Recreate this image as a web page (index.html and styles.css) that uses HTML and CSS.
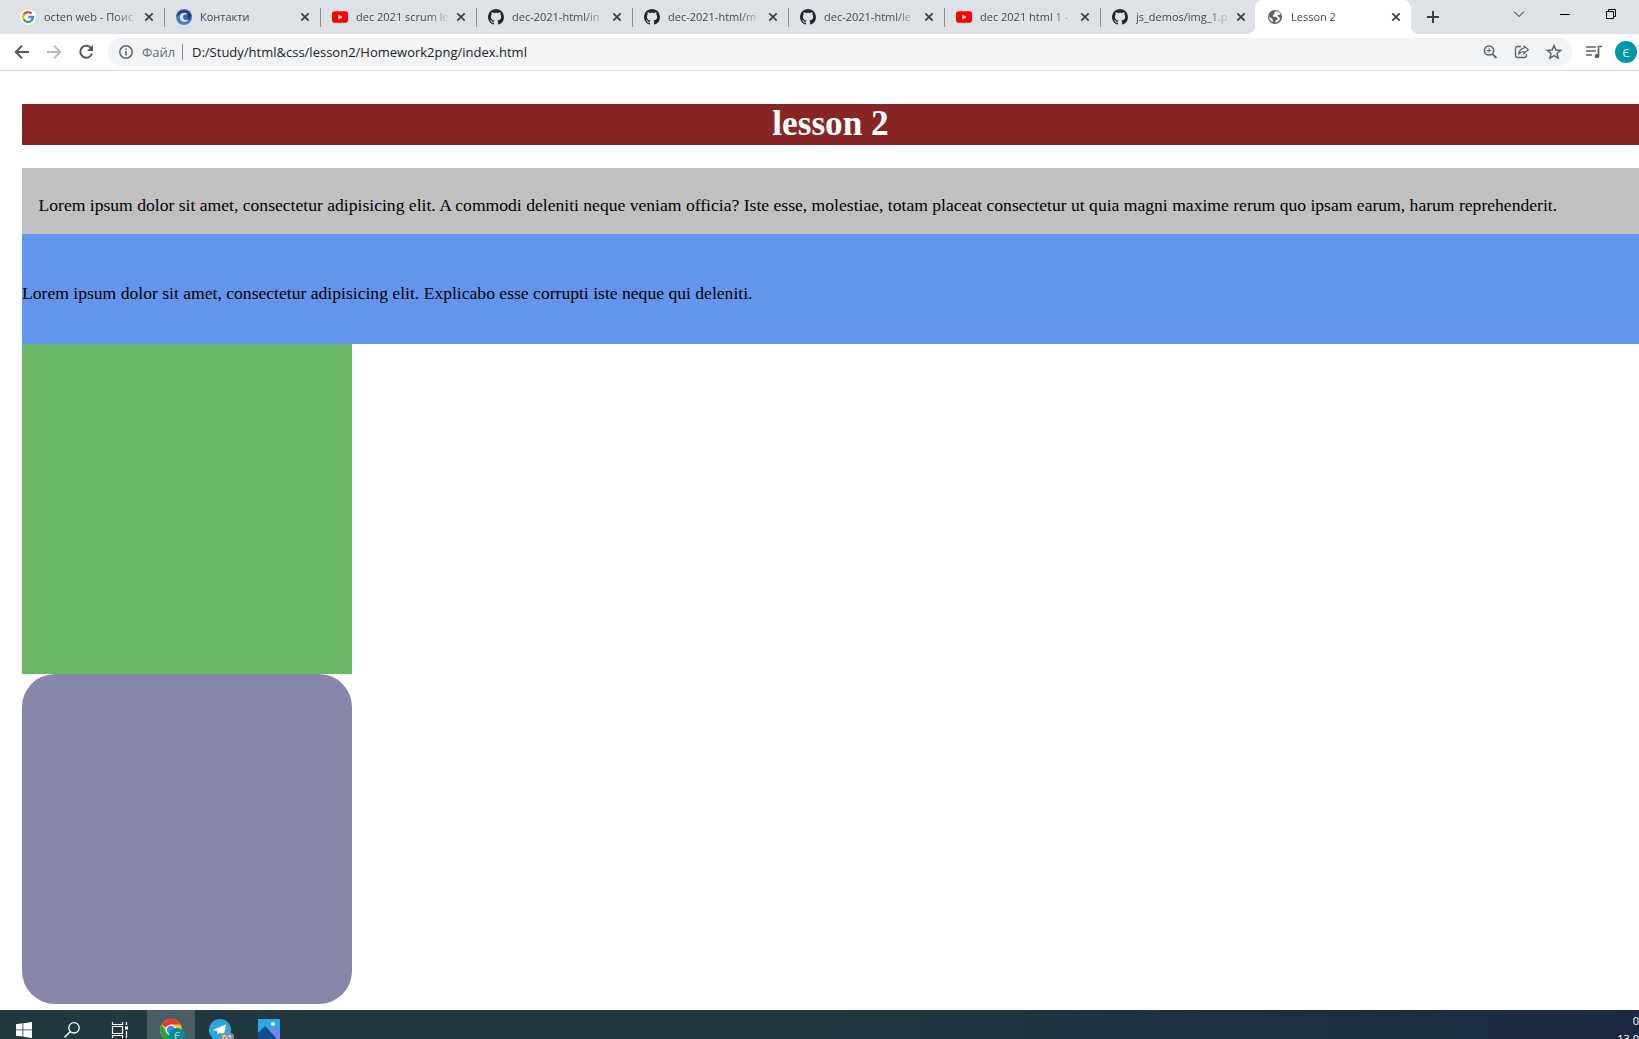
FILE: index.html
```html
<!DOCTYPE html>
<html lang="uk">
<head>
<meta charset="utf-8">
<title>Lesson 2</title>
<link rel="stylesheet" href="styles.css">
</head>
<body>
<svg class="sprite" aria-hidden="true">
  <symbol id="close" viewBox="0 0 10 10"><path d="M1.3 1.3l7.4 7.4M8.7 1.3L1.3 8.7" stroke="#3c4043" stroke-width="1.7"/></symbol>
  <symbol id="youtube" viewBox="0 0 16 16"><rect y="2.3" width="16" height="11.4" rx="2.6" fill="#f00"/><path d="M6.4 5.5v5L10.6 8z" fill="#fff"/></symbol>
  <symbol id="github" viewBox="0 0 16 16"><path fill="#24292f" d="M8 0C3.58 0 0 3.58 0 8c0 3.54 2.29 6.53 5.47 7.59.4.07.55-.17.55-.38 0-.19-.01-.82-.01-1.49-2.01.37-2.53-.49-2.69-.94-.09-.23-.48-.94-.82-1.13-.28-.15-.68-.52-.01-.53.63-.01 1.08.58 1.23.82.72 1.21 1.87.87 2.33.66.07-.52.28-.87.51-1.07-1.78-.2-3.64-.89-3.64-3.95 0-.87.31-1.59.82-2.15-.08-.2-.36-1.02.08-2.12 0 0 .67-.21 2.2.82.64-.18 1.32-.27 2-.27s1.36.09 2 .27c1.53-1.04 2.2-.82 2.2-.82.44 1.1.16 1.92.08 2.12.51.56.82 1.27.82 2.15 0 3.07-1.87 3.75-3.65 3.95.29.25.54.73.54 1.48 0 1.07-.01 1.93-.01 2.2 0 .21.15.46.55.38A8.01 8.01 0 0 0 16 8c0-4.42-3.58-8-8-8z"/></symbol>
</svg>

<header class="browser">
  <div class="tabstrip">
    <div class="tab">
      <svg class="favicon" viewBox="0 0 16 16"><circle cx="8" cy="8" r="8" fill="#fff"/><g fill="none" stroke-width="2.3"><path d="M11.6 4.6A5 5 0 0 0 3.6 5.7" stroke="#ea4335"/><path d="M3.6 5.7a5 5 0 0 0 0 4.6" stroke="#fbbc05"/><path d="M3.6 10.3a5 5 0 0 0 7.6 1.5" stroke="#34a853"/><path d="M11.2 11.8A5 5 0 0 0 13 8H8.2" stroke="#4285f4"/></g></svg>
      <a class="tab-title" href="#">octen web - Поис</a>
      <button class="tab-close" aria-label="Закрити"><svg><use href="#close"/></svg></button>
    </div>
    <div class="tab">
      <svg class="favicon" viewBox="0 0 16 16"><circle cx="8" cy="8" r="8" fill="#4a78c4"/><path d="M.5 7A8 8 0 0 1 15.500 6C15 10 13 12 11 12.500 13 9 12 4.500 8 4 4 3.700 3 6 .5 7z" fill="#233f7a"/><path d="M11.500 5A4.600 4.600 0 1 0 12.500 10.500C10 12 6.500 11 6.800 8 7 6 9 4.800 11.500 5z" fill="#dce7f7"/><circle cx="9.800" cy="8.300" r="2" fill="#3560ab"/></svg>
      <a class="tab-title" href="#">Контакти</a>
      <button class="tab-close" aria-label="Закрити"><svg><use href="#close"/></svg></button>
    </div>
    <div class="tab">
      <svg class="favicon"><use href="#youtube"/></svg>
      <a class="tab-title" href="#">dec 2021 scrum le</a>
      <button class="tab-close" aria-label="Закрити"><svg><use href="#close"/></svg></button>
    </div>
    <div class="tab">
      <svg class="favicon"><use href="#github"/></svg>
      <a class="tab-title" href="#">dec-2021-html/in</a>
      <button class="tab-close" aria-label="Закрити"><svg><use href="#close"/></svg></button>
    </div>
    <div class="tab">
      <svg class="favicon"><use href="#github"/></svg>
      <a class="tab-title" href="#">dec-2021-html/m</a>
      <button class="tab-close" aria-label="Закрити"><svg><use href="#close"/></svg></button>
    </div>
    <div class="tab">
      <svg class="favicon"><use href="#github"/></svg>
      <a class="tab-title" href="#">dec-2021-html/le</a>
      <button class="tab-close" aria-label="Закрити"><svg><use href="#close"/></svg></button>
    </div>
    <div class="tab">
      <svg class="favicon"><use href="#youtube"/></svg>
      <a class="tab-title" href="#">dec 2021 html 1 -</a>
      <button class="tab-close" aria-label="Закрити"><svg><use href="#close"/></svg></button>
    </div>
    <div class="tab tab-last">
      <svg class="favicon"><use href="#github"/></svg>
      <a class="tab-title" href="#">js_demos/img_1.p</a>
      <button class="tab-close" aria-label="Закрити"><svg><use href="#close"/></svg></button>
    </div>
    <div class="tab tab-active">
      <svg class="favicon" viewBox="0 0 16 16"><circle cx="8" cy="8" r="7" fill="#5f6368"/><path d="M8.5 2.3L7 4.2v1.6L5.6 6.6l.6 1.2h3l1.2 1.4v1.2L8.6 11.6l-.5 2.1 2.6-.6 2.6-3-.6-1.5-1.6-.8-.8-1.8h1.8l1.5-.9-1-1.6-1.8-1.1zM2.2 7.6l3.6 3v2.6L4 12.1 2.6 10z" fill="#fff"/></svg>
      <a class="tab-title" href="#">Lesson 2</a>
      <button class="tab-close" aria-label="Закрити"><svg><use href="#close"/></svg></button>
    </div>
    <button class="new-tab" aria-label="Нова вкладка"><svg width="12" height="12" viewBox="0 0 12 12"><path d="M6 0v12M0 6h12" stroke="#3c4043" stroke-width="2"/></svg></button>
    <div class="window-controls">
      <button aria-label="Пошук вкладок"><svg width="10" height="10" viewBox="0 0 10 10"><path d="M0 2.5l5 5 5-5" fill="none" stroke="#222"/></svg></button>
      <button aria-label="Згорнути"><svg width="10" height="10" viewBox="0 0 10 10"><path d="M0 5.5h10" stroke="#000"/></svg></button>
      <button aria-label="Відновити"><svg width="10" height="10" viewBox="0 0 10 10"><path d="M.5 2.5h7v7h-7zM2.5 2.5v-2h7v7h-2" fill="none" stroke="#000"/></svg></button>
    </div>
  </div>

  <div class="toolbar">
    <button class="tool" aria-label="Назад"><svg width="16" height="16" viewBox="0 0 16 16"><path d="M15 8H2.2M8 1.8L1.8 8 8 14.2" fill="none" stroke="#55595d" stroke-width="2"/></svg></button>
    <button class="tool" aria-label="Вперед"><svg width="16" height="16" viewBox="0 0 16 16"><path d="M1 8h12.8M8 1.8L14.2 8 8 14.2" fill="none" stroke="#b9bbbd" stroke-width="2"/></svg></button>
    <button class="tool" aria-label="Оновити"><svg width="16" height="16" viewBox="0 0 16 16"><path d="M13.4 4.6A6 6 0 1 0 14 9.5" fill="none" stroke="#55595d" stroke-width="2"/><path d="M15 1v6H9z" fill="#55595d"/></svg></button>
    <div class="omnibox">
      <svg width="16" height="16" viewBox="0 0 16 16"><circle cx="8" cy="8" r="6.2" fill="none" stroke="#5f6368" stroke-width="1.5"/><path d="M8 7v4.4M8 4.4V6" stroke="#5f6368" stroke-width="1.6"/></svg>
      <label class="scheme" for="url">Файл</label>
      <input class="url" id="url" type="text" value="D:/Study/html&amp;css/lesson2/Homework2png/index.html">
      <button class="tool" aria-label="Масштаб"><svg width="16" height="16" viewBox="0 0 16 16"><circle cx="7" cy="6.5" r="4.6" fill="none" stroke="#5f6368" stroke-width="1.5"/><path d="M10.3 9.8l4.2 4.2" stroke="#5f6368" stroke-width="1.8"/><path d="M7 4.3v4.4M4.8 6.5h4.4" stroke="#5f6368"/></svg></button>
      <button class="tool" aria-label="Поділитися"><svg width="16" height="16" viewBox="0 0 16 16"><path d="M7 2.5H3.5a2 2 0 0 0-2 2v7a2 2 0 0 0 2 2h7a2 2 0 0 0 2-2V10" fill="none" stroke="#5f6368" stroke-width="1.3"/><path d="M10 2l4.3 3.8L10 9.6V7.5c-2.6 0-4.2.8-5.4 2.6C5 7 6.8 4.5 10 4.1z" fill="none" stroke="#5f6368" stroke-width="1.2" stroke-linejoin="round"/></svg></button>
      <button class="tool" aria-label="Закладка"><svg width="16" height="16" viewBox="0 0 16 16"><path d="M8 1.600l1.900 4.400 4.800.4-3.700 3.100 1.200 4.700L8 11.700l-4.200 2.500 1.200-4.700L1.300 6.400l4.800-.4z" fill="none" stroke="#5f6368" stroke-width="1.5"/></svg></button>
    </div>
    <button class="tool media" aria-label="Медіа"><svg width="16" height="16" viewBox="0 0 16 16"><path d="M0 3h10M0 7h10M0 11h6" stroke="#5f6368" stroke-width="1.6"/><path d="M12.5 12.5V2.5H16" fill="none" stroke="#5f6368" stroke-width="1.7"/><circle cx="11" cy="12" r="2.3" fill="#5f6368"/></svg></button>
    <button class="avatar">Є</button>
  </div>
</header>

<main class="viewport">
  <h1 class="heading">lesson 2</h1>
  <p class="silver">Lorem ipsum dolor sit amet, consectetur adipisicing elit. A commodi deleniti neque veniam officia? Iste esse, molestiae, totam placeat consectetur ut quia magni maxime rerum quo ipsam earum, harum reprehenderit.</p>
  <p class="blue">Lorem ipsum dolor sit amet, consectetur adipisicing elit. Explicabo esse corrupti iste neque qui deleniti.</p>
  <div class="square green"></div>
  <div class="square purple"></div>
</main>

<footer class="taskbar">
  <button aria-label="Пуск"><svg width="16" height="16" viewBox="0 0 16 16"><path d="M0 2.2L6.5 1.3v6.2H0zM7.3 1.2L16 0v7.5H7.3zM0 8.3h6.5v6.3L0 13.7zM7.3 8.3H16V16l-8.7-1.2z" fill="#fff"/></svg></button>
  <button aria-label="Пошук"><svg width="16" height="16" viewBox="0 0 16 16"><circle cx="10" cy="5.8" r="5.2" fill="none" stroke="#fff" stroke-width="1.3"/><path d="M6.3 9.5L.5 15.5" stroke="#fff" stroke-width="1.4"/></svg></button>
  <button aria-label="Перегляд завдань"><svg width="16" height="16" viewBox="0 0 16 16"><path d="M.5 0v2.5h10V0M.5 16v-2.5h10V16M.5 4.5h10v7H.5zM14.5 0v3M14.5 9v7" fill="none" stroke="#fff" stroke-width="1.2"/><path d="M13 4.5h3v3h-3z" fill="#fff"/></svg></button>
  <div class="apps">
    <button class="app-active" aria-label="Chrome"><svg width="24" height="24" viewBox="0 0 24 24"><circle cx="12" cy="12" r="11" fill="#fbc116"/><path d="M12 12L2.5 6.5A11 11 0 0 1 21.5 6.5H12z" fill="#e33b2e"/><path d="M2.5 6.5a11 11 0 0 0 8 16.4L15 15l-7.500-.5z" fill="#23a14b"/><circle cx="12" cy="12" r="5.400" fill="#fff"/><circle cx="12" cy="12" r="4.200" fill="#4285f4"/><circle cx="18" cy="18" r="8" fill="#0d8a92"/><text x="15" y="22" class="badge-letter">Є</text></svg></button>
    <button aria-label="Telegram"><svg width="24" height="24" viewBox="0 0 24 24"><circle cx="12" cy="12" r="11" fill="#2ca5e0"/><path d="M4.500 12L18 6.500l-2.200 11-4-3-2 2-.6-3.600z" fill="#fff"/><rect x="12" y="15" width="14" height="12" rx="4" fill="#8a8a8a"/><text x="14" y="24" class="badge-count">01</text></svg></button>
    <button aria-label="Фотографії"><svg width="22" height="22" viewBox="0 0 22 22"><rect width="22" height="22" rx="1" fill="#2ba7ec"/><path d="M9 13l6-6 7 8v7H9z" fill="#7b87dc"/><path d="M0 14l7-7 14 15H0z" fill="#0e4a8d"/><circle cx="15" cy="5" r="2" fill="#fff"/></svg></button>
  </div>
  <div class="clock"><span>0</span><span>13.0</span></div>
</footer>
</body>
</html>
```
FILE: styles.css
```css
* { box-sizing: border-box; }

body {
  display: flex;
  flex-direction: column;
  height: 100vh;
  margin: 0;
  overflow: hidden;
  background: #fff;
  font-family: "Open Sans", "Noto Sans", sans-serif;
  font-size: 11px;
}

button {
  display: flex;
  align-items: center;
  justify-content: center;
  flex: none;
  padding: 0;
  border: 0;
  background: none;
  font: inherit;
}

svg { flex: none; overflow: visible; }

.sprite { position: absolute; width: 0; height: 0; }

/* Tabs */
.tabstrip {
  display: flex;
  height: 34px;
  padding-left: 8px;
  background: #dee1e6;
}

.tab {
  position: relative;
  display: flex;
  align-items: center;
  flex: 0 1 156px;
  min-width: 0;
  padding: 0 9px 0 12px;
}

.tab::after {
  content: "";
  position: absolute;
  top: 8px;
  left: 100%;
  width: 1px;
  height: 19px;
  background: #8a8d91;
}

.tab-last::after { display: none; }

.favicon { width: 16px; height: 16px; margin-right: 8px; }

.tab-title {
  flex: 1;
  min-width: 0;
  overflow: hidden;
  color: #45494d;
  line-height: 18px;
  text-decoration: none;
  white-space: nowrap;
  -webkit-mask-image: linear-gradient(to left, transparent, #000 24px);
  mask-image: linear-gradient(to left, transparent, #000 24px);
}

.tab-close { width: 12px; height: 16px; margin-left: 4px; }
.tab-close svg { width: 10px; height: 10px; }

.tab-active {
  margin-left: -1px;
  border-radius: 8px 8px 0 0;
  background: #fff;
}

.tab-active::before,
.tab-active::after {
  content: "";
  position: absolute;
  top: auto;
  bottom: 0;
  width: 8px;
  height: 8px;
}

.tab-active::before {
  right: 100%;
  background: radial-gradient(circle at 0 0, transparent 8px, #fff 8px);
}

.tab-active::after {
  left: 100%;
  background: radial-gradient(circle at 100% 0, transparent 8px, #fff 8px);
}

.new-tab { width: 28px; margin-left: 8px; }

.window-controls { display: flex; margin-left: auto; padding-right: 5px; }
.window-controls button { width: 46px; height: 28px; }

/* Address bar */
.toolbar {
  display: flex;
  align-items: center;
  height: 37px;
  padding: 3px 2px 3px 6px;
  border-bottom: 1px solid #d8dadc;
}

.tool { width: 32px; height: 28px; }

.omnibox {
  display: flex;
  align-items: center;
  flex: 1;
  height: 28px;
  margin-left: 6px;
  padding: 0 2px 0 10px;
  border-radius: 14px;
  background: #f1f3f4;
}

.scheme {
  width: 41px;
  margin: 0 9px 0 8px;
  border-right: 1px solid #8a8d91;
  color: #6b6f73;
  font-size: 13px;
  line-height: 16px;
}

.url {
  flex: 1;
  min-width: 0;
  padding: 0;
  border: 0;
  background: none;
  color: #202124;
  font: 13px "Open Sans", "Noto Sans", sans-serif;
}

.media { width: 43px; }

.avatar {
  width: 22px;
  height: 22px;
  border-radius: 50%;
  background: #0097a7;
  color: #fff;
}

/* Page, shown at 110% browser zoom */
.viewport {
  flex: 1;
  min-height: 0;
  overflow: hidden;
  padding: 30px 0 0 20px;
  zoom: 1.1;
  font-family: "Liberation Serif", "Times New Roman", serif;
  font-size: 16px;
  line-height: 18px;
}

.heading {
  margin: 0 0 21px;
  background: #882626;
  color: #fff;
  font-size: 32px;
  line-height: 37px;
  text-align: center;
}

.silver {
  height: 60px;
  margin: 0;
  padding: 26px 15px 0;
  background: silver;
}

.blue {
  height: 100px;
  margin: 0;
  background: cornflowerblue;
  line-height: 108px;
}

.square { width: 300px; height: 300px; }
.green { background: #6bb966; }
.purple { border-radius: 30px; background: #8986ab; }

/* Taskbar */
.taskbar {
  display: flex;
  flex: none;
  height: 29px;
  overflow: hidden;
  background: linear-gradient(90deg, #22383f, #22383f 50%, #1a2842);
}

.taskbar button { width: 48px; height: 40px; }
.apps { display: flex; gap: 1px; margin-left: 3px; }
.taskbar .app-active { background: #4b5d64; }

.badge-letter { fill: #9fe3e4; font-size: 10px; }
.badge-count { fill: #fff; font-size: 9px; }

.clock {
  display: flex;
  flex-direction: column;
  align-items: flex-end;
  margin-left: auto;
  padding-top: 2px;
  color: #fff;
  line-height: 18px;
}
```
